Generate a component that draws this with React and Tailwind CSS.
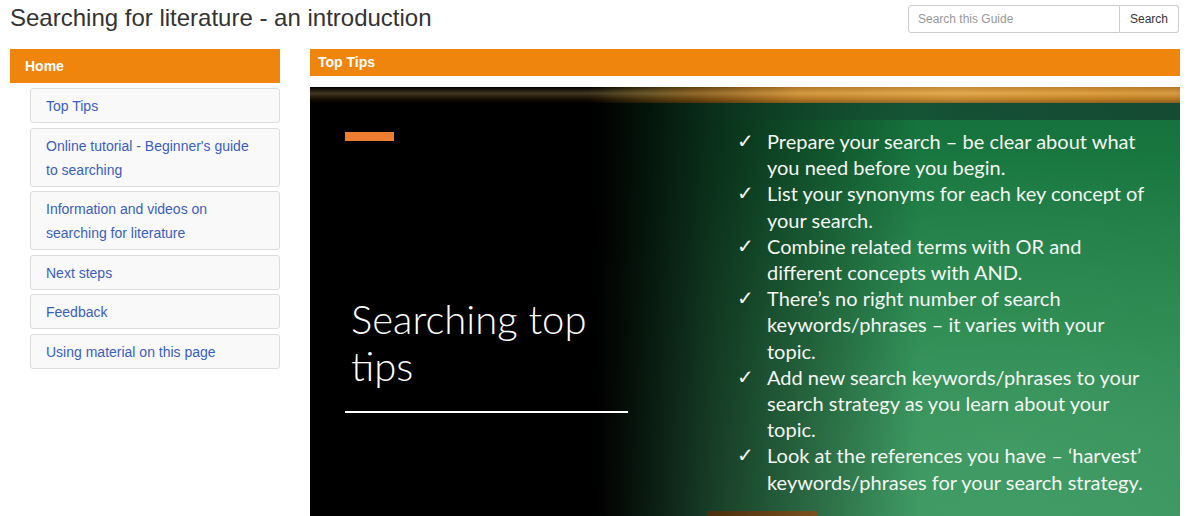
const navItems = [
  ['Top Tips'],
  ["Online tutorial - Beginner's guide", 'to searching'],
  ['Information and videos on', 'searching for literature'],
  ['Next steps'],
  ['Feedback'],
  ['Using material on this page'],
];

const tips = [
  ['Prepare your search \u2013 be clear about what', 'you need before you begin.'],
  ['List your synonyms for each key concept of', 'your search.'],
  ['Combine related terms with OR and', 'different concepts with AND.'],
  ['There\u2019s no right number of search', 'keywords/phrases \u2013 it varies with your', 'topic.'],
  ['Add new search keywords/phrases to your', 'search strategy as you learn about your', 'topic.'],
  ['Look at the references you have \u2013 \u2018harvest\u2019', 'keywords/phrases for your search strategy.'],
];

function Slide() {
  return (
    <div className="relative h-[450px] overflow-hidden bg-[linear-gradient(to_right,#000_0%,#000_33%,rgba(0,0,0,0.6)_46%,rgba(0,0,0,0)_70%),radial-gradient(ellipse_at_80%_80%,rgba(80,165,110,0.55),rgba(80,165,110,0)_60%),linear-gradient(to_bottom,#14703a,#22844a_55%,#37955f)]">
      {/* gold band across the top */}
      <div className="absolute inset-x-0 top-0 h-[16px] bg-[linear-gradient(to_right,rgba(0,0,0,0)_32%,#6a4410_44%,#c4842a_56%,#d99a3c_74%,#d08c2a_90%,#c8862a)]" />
      <div className="absolute inset-x-0 top-0 h-[16px] bg-[linear-gradient(to_bottom,rgba(0,0,0,0.1),rgba(255,215,130,0.25)_40%,rgba(120,70,10,0.2)_75%,rgba(0,0,0,0.3))]" />
      <div className="absolute inset-x-0 top-[16px] h-[17px] bg-[linear-gradient(to_right,rgba(0,0,0,0)_40%,rgba(20,50,45,0.55)_75%,rgba(20,50,45,0.6))]" />
      {/* brown tab at the bottom */}
      <div className="absolute left-[397px] top-[424px] h-[30px] w-[110px] bg-[linear-gradient(to_right,#4a2e0c,#7a5020)]" />

      <div className="relative flex font-['Lato','Open_Sans',sans-serif] text-white">
        <div className="flex w-[318px] shrink-0 flex-col pl-[35px] pt-[45px]">
          <div className="h-[9px] w-[49px] bg-[#ed7d31]" />
          <div className="mt-[155px] pl-[6px] text-[40px] font-light leading-[47px]">
            Searching top
            <br />
            tips
          </div>
          <div className="mt-[21px] h-[1.5px] w-[283px] bg-white" />
        </div>
        <div className="flex flex-col pl-[109px] pt-[41px] text-[20px] leading-[26.2px] text-[#f3f6f3]">
          {tips.map((lines, i) => (
            <div key={i} className="flex">
              <span className="w-[30px] shrink-0 font-['DejaVu_Sans',sans-serif] text-[20px] font-bold">{'\u2713'}</span>
              <div className="whitespace-nowrap">
                {lines.map((l, j) => (
                  <div key={j}>{l}</div>
                ))}
              </div>
            </div>
          ))}
        </div>
      </div>
    </div>
  );
}

export default function App() {
  return (
    <div className="h-[516px] overflow-hidden bg-white font-['Liberation_Sans',Arial,sans-serif]">
      <div className="ml-[10px] w-[1170px]">
        <div className="flex items-start justify-between">
          <h1 className="mt-[5px] text-[24px] leading-[26.4px] text-[#333]">
            Searching for literature - an introduction
          </h1>
          <div className="mr-px mt-[5px] flex h-[28px] text-[12px]">
            <div className="flex w-[212px] items-center rounded-l-[3px] border border-[#ccc] px-[9px] text-[#999]">
              Search this Guide
            </div>
            <div className="flex w-[59px] items-center justify-center rounded-r-[3px] border border-l-0 border-[#ccc] text-[#333]">
              Search
            </div>
          </div>
        </div>

        <div className="mt-[16px] flex gap-[30px]">
          <div className="w-[270px] shrink-0">
            <div className="flex h-[34px] items-center bg-[#f0850d] px-[15px] text-[14px] font-bold text-white">
              Home
            </div>
            <div className="ml-[20px] mt-[5px] flex flex-col gap-[4.5px]">
              {navItems.map((lines, i) => (
                <div
                  key={i}
                  className="rounded-[3px] border border-[#ddd] bg-[#f9f9f9] px-[15px] pb-[4px] pt-[5px] text-[14px] leading-[24px] text-[#3a5ec0]"
                >
                  {lines.map((l, j) => (
                    <div key={j}>{l}</div>
                  ))}
                </div>
              ))}
            </div>
          </div>

          <div className="w-[870px]">
            <div className="flex h-[27px] items-center bg-[#f0850d] px-[8px] text-[14px] font-bold text-white">
              Top Tips
            </div>
            <div className="mt-[11px]">
              <Slide />
            </div>
          </div>
        </div>
      </div>
    </div>
  );
}
